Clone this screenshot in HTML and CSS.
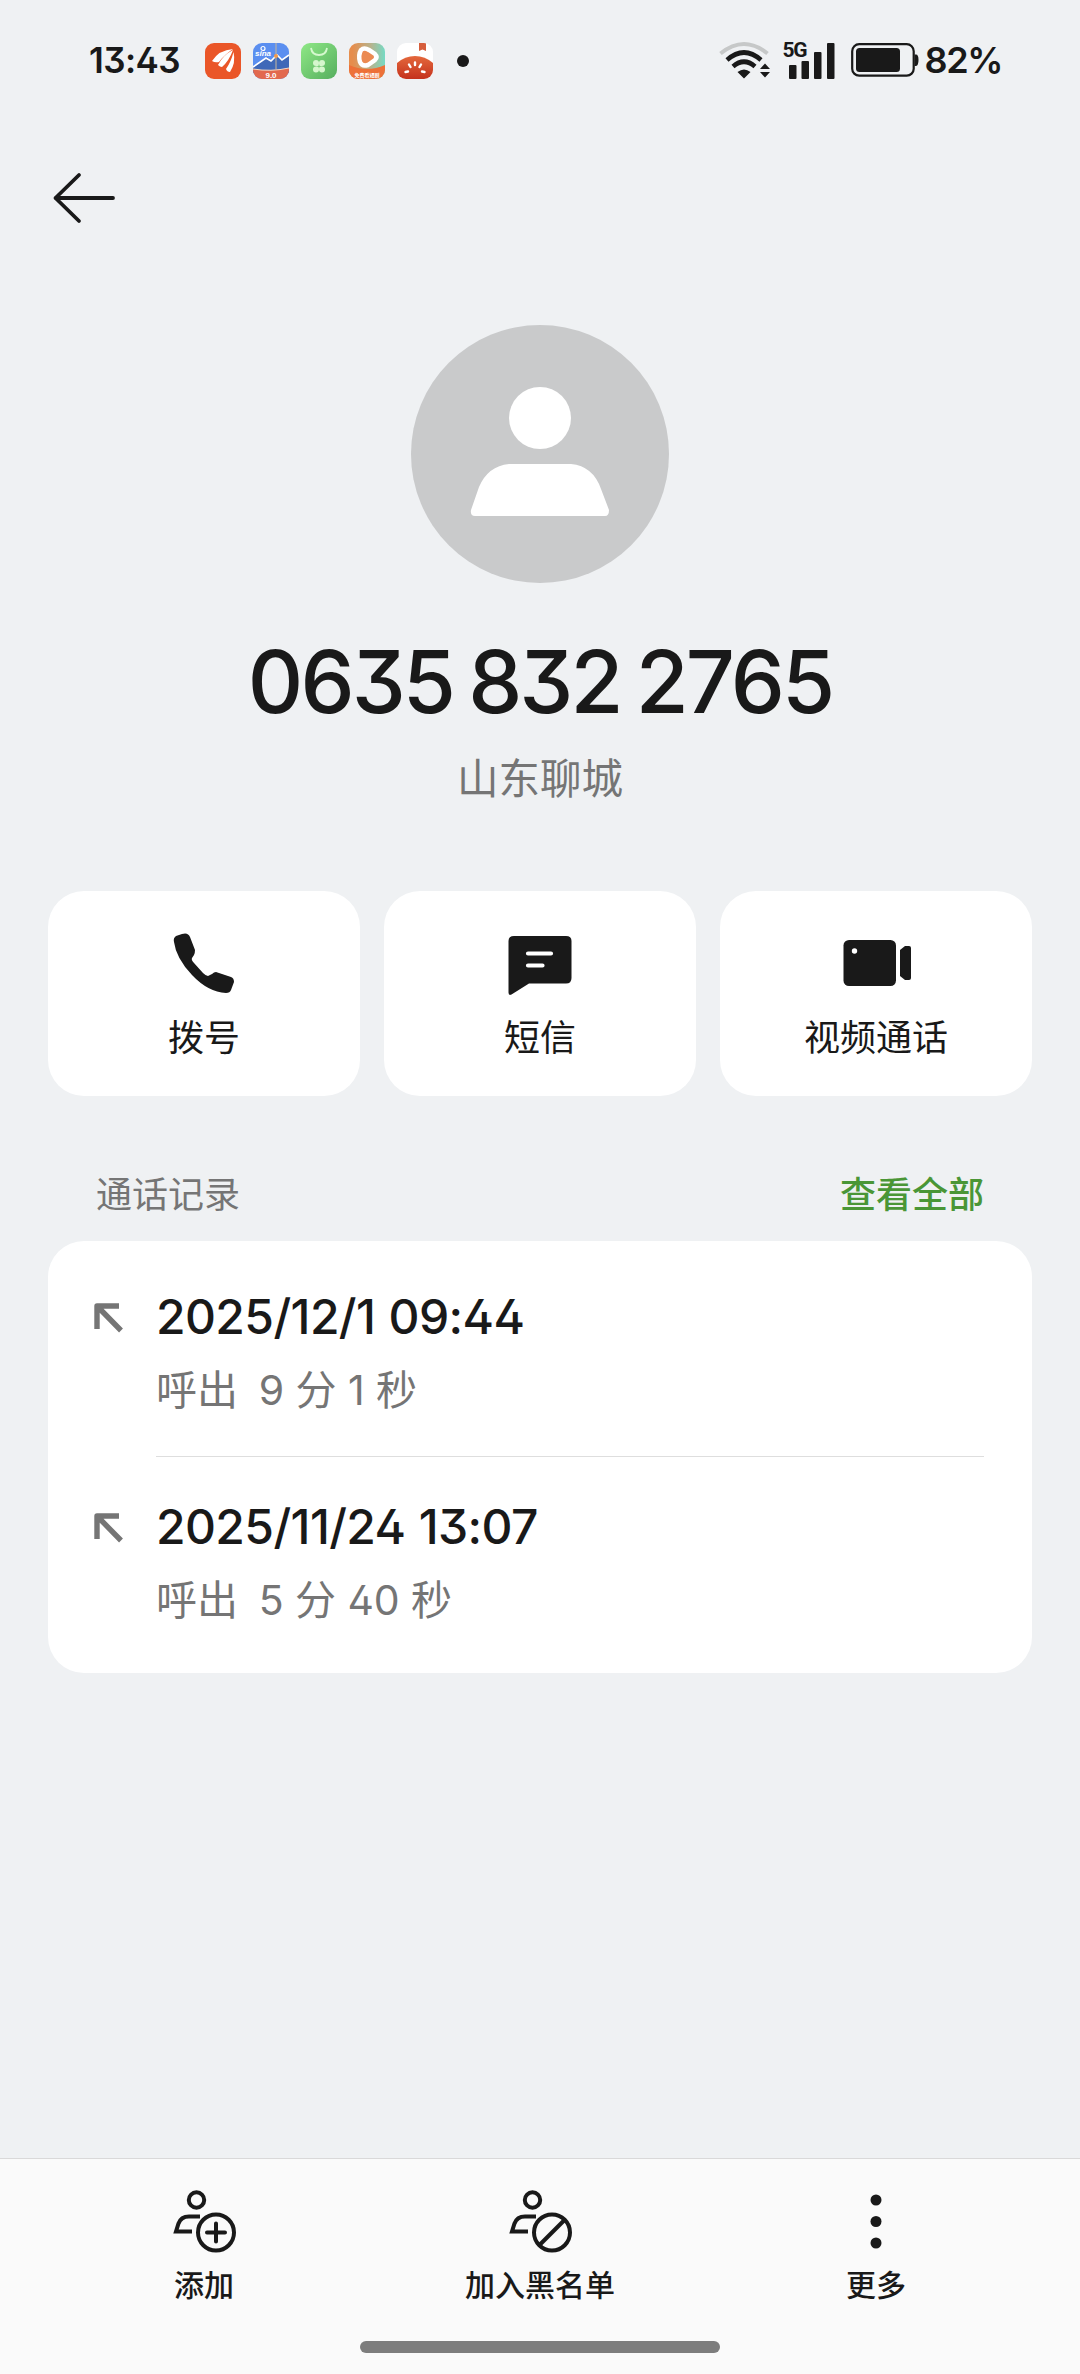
FILE: index.html
```html
<!DOCTYPE html>
<html lang="zh-CN">
<head>
<meta charset="utf-8">
<title>通话详情</title>
<link rel="stylesheet" href="styles.css">
</head>
<body>
<div class="screen">
  <header class="status">
    <span class="clock">13:43</span>
    <div class="apps">
      <svg class="app" viewBox="0 0 36 36"><rect width="36" height="36" rx="9" fill="#ea5628"/><path d="M7 18Q14 7 28 6Q19 12 14 19Q10 20 7 18ZM13 22Q18 12 28 7Q24 18 17 24Q15 24 13 22ZM21 26Q26 19 28.500 9Q31 20 25 29Q22 29 21 26Z" fill="#fff"/></svg>
      <svg class="app" viewBox="0 0 36 36"><defs><clipPath id="round"><rect width="36" height="36" rx="9"/></clipPath></defs><g clip-path="url(#round)"><path d="M0 0H36V36H0Z" fill="#5b8ff0"/><path d="M0 25L14 14L19 18L24 12L29 17L36 12V30H0Z" fill="#3f68b8"/><path d="M0 24L13 15L18 18L24 12L29 17L36 12" fill="none" stroke="#fff" stroke-width="1.6"/><path d="M23 0V26" stroke="#c7b69c" stroke-width="1"/><circle cx="23" cy="13" r="2" fill="#f29a4c"/><path d="M0 26Q18 29 36 25V36H0Z" fill="#e2694e"/><path d="M0 26Q18 29 36 25" fill="none" stroke="#f6d9c0"/><circle cx="10" cy="5.500" r="2" fill="none" stroke="#fff" stroke-width="1.2"/></g><text x="2" y="13" class="sina">sina</text><text x="18" y="34.500" class="ver">9.0</text></svg>
      <svg class="app" viewBox="0 0 36 36"><defs><linearGradient id="leaf" x2="1" y2="1"><stop stop-color="#8fe886"/><stop offset="1" stop-color="#55ae5e"/></linearGradient></defs><rect width="36" height="36" rx="9" fill="url(#leaf)"/><path d="M10 5Q11 12 18 12Q25 12 26 5" fill="none" stroke="#d5f8ce" stroke-width="1.8"/><g fill="#d5f6cd"><circle cx="15" cy="20" r="3"/><circle cx="21" cy="20" r="3"/><circle cx="15" cy="26.500" r="3"/><circle cx="21" cy="26.500" r="3"/><path d="M15 20h2.500v3H15zM18.500 20H21v3h-2.500zM15 23.800h2.500v2.700H15zM18.500 23.800H21v2.700h-2.500z"/></g></svg>
      <svg class="app" viewBox="0 0 36 36"><defs><linearGradient id="play" x2="1" y2="0"><stop offset=".1" stop-color="#e68d4c"/><stop offset=".6" stop-color="#b8b38c"/><stop offset="1" stop-color="#75dac4"/></linearGradient></defs><g clip-path="url(#round)"><path d="M0 0H36V36H0Z" fill="url(#play)"/><path d="M0 22Q18 30 36 22V36H0Z" fill="#ed7138"/><path d="M12 7Q15 4 20 7L26 11Q29 14 26 17L19 22Q13 24 11 19Q9 12 12 7Z" fill="#eb8a52" stroke="#fff" stroke-width="4.500"/></g><text x="18" y="34" class="tiny">免费看短剧</text></svg>
      <svg class="app" viewBox="0 0 36 36"><defs><linearGradient id="tomato" x2="0" y2="1"><stop stop-color="#e4683c"/><stop offset="1" stop-color="#c4321d"/></linearGradient></defs><g clip-path="url(#round)"><path d="M0 0H36V36H0Z" fill="#fff"/><path d="M0 20Q8 13 18 13Q28 13 36 20V36H0Z" fill="url(#tomato)"/><path d="M22 0H29V8L25.500 6.500L22 8Z" fill="#d65e3c"/><g stroke="#fff" stroke-width="2.400" stroke-linecap="round"><path d="M18 19.500V22M12 21.500L13.500 24M24 21.500L22.500 24M8.500 29L11 28.500M27.500 29L25 28.500"/></g></g></svg>
      <i class="more-dot"></i>
    </div>
    <div class="system">
      <svg class="wifi" viewBox="0 0 52 38"><g fill="none" stroke="#191919" stroke-width="4.600"><path d="M1.500 12.500Q25 -6.500 48.500 12.500" stroke="#c6c8c8" stroke-width="4"/><path d="M8 19Q25 4 42 19"/><path d="M14 25.500Q25 16 36 25.500"/></g><path d="M18.500 31Q25 26 31.500 31L25 37.500ZM41 28L46 22.500L51 28ZM41 31H51L46 36.500Z" fill="#191919"/></svg>
      <div class="signal"><span class="net">5G</span><svg viewBox="0 0 52 38"><g fill="#191919"><rect x="6" y="24" width="7.500" height="14" rx="1"/><rect x="18.500" y="20" width="7.500" height="18" rx="1"/><rect x="31" y="11" width="7.500" height="27" rx="1"/><rect x="44" y="2" width="7.500" height="36" rx="1"/></g></svg></div>
      <svg class="battery" viewBox="0 0 68 36"><rect x="1.200" y="2.200" width="61.500" height="31.500" rx="7" fill="none" stroke="#191919" stroke-width="2.200"/><rect x="5" y="6" width="44" height="24" rx="3.500" fill="#191919"/><path d="M63.500 12.500H65Q67.500 12.500 67.500 18T65 24H63.500Z" fill="#191919"/></svg>
      <span class="percent">82%</span>
    </div>
  </header>
  <nav class="topbar"><svg viewBox="0 0 64 52"><path d="M27 3L3.500 26L27 49M3.500 26H61" fill="none" stroke="#191919" stroke-width="3.800" stroke-linecap="round" stroke-linejoin="round"/></svg></nav>
  <section class="contact">
    <svg class="avatar" viewBox="0 0 258 258"><circle cx="129" cy="129" r="129" fill="#c9cacb"/><circle cx="129" cy="93" r="31" fill="#fff"/><path d="M98 139H160Q182 141 190 164L198 185Q198 191 194 191H64Q59 191 60 185L68 162Q77 141 98 139Z" fill="#fff"/></svg>
    <h1 class="number">0635 832 2765</h1>
    <p class="place">山东聊城</p>
  </section>
  <section class="actions">
    <button class="action"><svg viewBox="0 0 72 72"><path d="M14 7L8 9Q5 11 6 15Q8 31 24 48Q40 65 58 66Q62 66 63 63L66 55Q66 51 63 50L48 45Q46 45 44 47L40 49Q38 49 35 46L26 36Q23 33 24 31L26 28Q27 26 27 23L22 10Q20 5 14 7Z" fill="#191919"/></svg><span>拨号</span></button>
    <button class="action"><svg viewBox="0 0 72 72"><path d="M10 9H62Q67.500 9 67.500 14V51Q67.500 56.500 62 56.500H25L7.500 67.500Q4.500 69 4.500 65.500V14Q4.500 9 10 9Z" fill="#191919"/><path d="M24 26.500H47M24 38.500H38.500" stroke="#fff" stroke-width="4.200" stroke-linecap="round"/></svg><span>短信</span></button>
    <button class="action"><svg viewBox="0 0 72 72"><rect x="3.500" y="13" width="52.500" height="46" rx="5.500" fill="#191919"/><circle cx="14.500" cy="24" r="2.700" fill="#fff"/><path d="M65 19H69Q71 19 71 21V51Q71 53 69 53H65L60 49V23Z" fill="#191919"/></svg><span>视频通话</span></button>
  </section>
  <div class="section-head"><span>通话记录</span><a class="all">查看全部</a></div>
  <section class="calls">
    <article class="call">
      <svg class="out" viewBox="0 0 30 30"><path d="M25 3H3V26M3 3L27 27.500" fill="none" stroke="#757575" stroke-width="5.400" stroke-linejoin="round"/></svg>
      <div class="info"><div class="date">2025/12/1 09:44</div><div class="detail"><span>呼出</span><span>9 分 1 秒</span></div></div>
    </article>
    <article class="call">
      <svg class="out" viewBox="0 0 30 30"><path d="M25 3H3V26M3 3L27 27.500" fill="none" stroke="#757575" stroke-width="5.400" stroke-linejoin="round"/></svg>
      <div class="info"><div class="date">2025/11/24 13:07</div><div class="detail"><span>呼出</span><span>5 分 40 秒</span></div></div>
    </article>
  </section>
  <footer class="toolbar">
    <div class="tools">
      <div class="tool"><svg viewBox="0 0 72 72"><g fill="none" stroke="#191919" stroke-width="4"><circle cx="28.500" cy="14" r="7.700"/><path d="M32 30.500H21Q13 30.500 10.500 37.500L8 45.500H24"/><circle cx="48" cy="46.500" r="18"/><path d="M39 46.500H57M48 37.500V55.500" stroke-linecap="round"/></g></svg><span>添加</span></div>
      <div class="tool"><svg viewBox="0 0 72 72"><g fill="none" stroke="#191919" stroke-width="4"><circle cx="28.500" cy="14" r="7.700"/><path d="M32 30.500H21Q13 30.500 10.500 37.500L8 45.500H24"/><circle cx="48" cy="46.500" r="18"/><path d="M35.500 59L60.500 34"/></g></svg><span>加入黑名单</span></div>
      <div class="tool"><svg viewBox="0 0 72 72"><g fill="#191919"><circle cx="36" cy="14" r="5.500"/><circle cx="36" cy="35.500" r="5.500"/><circle cx="36" cy="57" r="5.500"/></g></svg><span>更多</span></div>
    </div>
    <i class="handle"></i>
  </footer>
</div>
</body>
</html>
```
FILE: styles.css
```css
* { box-sizing: border-box; }
body { margin: 0; background: #eff1f3; color: #191919; font-family: Inter, "Noto Sans CJK SC", sans-serif; font-feature-settings: "cv09" 1, "cv02" 1; }
svg { display: block; }
h1, p { margin: 0; }
.screen { display: flex; flex-direction: column; height: 2374px; }
.status { display: flex; align-items: center; height: 122px; padding: 0 78px 0 89px; }
.clock { width: 116px; padding-bottom: 2px; font-size: 35px; font-weight: 600; letter-spacing: -.6px; line-height: 40px; }
.apps { display: flex; align-items: center; gap: 12px; }
.app { width: 36px; height: 36px; }
.sina { font: italic 700 8px "Liberation Sans", sans-serif; fill: #fff; }
.ver { font: 700 8px "Liberation Sans", sans-serif; fill: #fff; text-anchor: middle; }
.tiny { font: 700 5px "Noto Sans CJK SC", sans-serif; fill: #fff; text-anchor: middle; }
.more-dot { width: 12px; height: 12px; margin-left: 12px; border-radius: 50%; background: #191919; }
.system { display: flex; align-items: center; margin-left: auto; padding-bottom: 2px; }
.wifi { width: 52px; height: 38px; margin-right: 12px; }
.signal { position: relative; width: 52px; height: 38px; margin-right: 16px; }
.net { position: absolute; left: 0; top: 0; font: 700 21px/18px Roboto, sans-serif; letter-spacing: -1.4px; }
.battery { width: 68px; height: 36px; margin-right: 6px; }
.percent { font-size: 36px; font-weight: 600; letter-spacing: -1.4px; line-height: 40px; }
.topbar { height: 203px; padding: 50px 52px; }
.topbar svg { width: 64px; height: 52px; }
.contact { display: flex; flex-direction: column; align-items: center; height: 566px; }
.avatar { width: 258px; height: 258px; }
.number { margin-top: 49px; font-size: 86px; font-weight: 500; line-height: 100px; letter-spacing: -2.9px; word-spacing: -5px; white-space: nowrap; }
.place { margin-top: 17px; color: #757575; font-size: 41.5px; font-weight: 400; line-height: 60px; }
.actions { display: grid; grid-template-columns: repeat(3, 1fr); gap: 24px; height: 205px; margin: 0 48px; }
.action { display: flex; flex-direction: column; align-items: center; padding: 36px 0 0; border: 0; border-radius: 36px; background: #fff; color: #191919; font: 400 36px/52px "Noto Sans CJK SC", sans-serif; }
.action svg { width: 72px; height: 72px; margin-bottom: 10px; }
.section-head { display: flex; justify-content: space-between; height: 145px; padding: 73px 96px 0; color: #757575; font-size: 36px; line-height: 52px; }
.all { color: #4a9636; font-weight: 500; }
.calls { height: 432px; margin: 0 48px; border-radius: 36px; background: #fff; }
.call { display: flex; height: 216px; padding: 0 48px 0 46px; }
.out { width: 30px; height: 30px; margin: 62px 32px 0 0; }
.info { flex: 1; padding-top: 46px; }
.call:first-child .info { border-bottom: 1px solid #dedede; }
.call:last-child .info { padding-top: 40px; }
.call:last-child .out { margin-top: 56px; }
.date { font-size: 48px; font-weight: 500; line-height: 60px; letter-spacing: -.6px; word-spacing: 1px; white-space: nowrap; }
.detail { display: flex; gap: 21px; margin-top: 13px; color: #757575; font-size: 41px; line-height: 60px; letter-spacing: -.1px; white-space: pre; }
.toolbar { display: flex; flex-direction: column; height: 216px; margin-top: auto; border-top: 1px solid #d9d9d9; background: #fafafa; }
.tools { display: grid; grid-template-columns: repeat(3, 1fr); gap: 24px; padding: 27px 48px 0; }
.tool { display: flex; flex-direction: column; align-items: center; font-size: 30px; font-weight: 500; line-height: 44px; }
.tool svg { width: 72px; height: 72px; margin-bottom: 5px; }
.handle { width: 360px; height: 12px; margin: 34px auto 0; border-radius: 6px; background: #7d7d7d; }
```
